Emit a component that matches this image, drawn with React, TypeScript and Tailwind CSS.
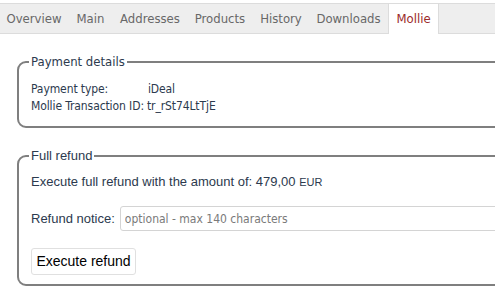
import React from "react";

const tabs = [
  { label: "Overview", w: "w-[68px]" },
  { label: "Main", w: "w-[45px]" },
  { label: "Addresses", w: "w-[74px]" },
  { label: "Products", w: "w-[66px]" },
  { label: "History", w: "w-[56px]" },
  { label: "Downloads", w: "w-[79px]" },
];

export default function App() {
  return (
    <div className="w-[495px] h-[296px] overflow-hidden bg-white text-[#2c3a4e]">
      <div className="mt-[3px] h-[31px] flex items-stretch border-y border-[#dcdcdc] bg-[#eeeeee] font-['DejaVu_Sans_Condensed','DejaVu_Sans',sans-serif] text-[13px] text-[#686868]">
        {tabs.map((t) => (
          <div key={t.label} className={`${t.w} flex items-center justify-center`}>
            {t.label}
          </div>
        ))}
        <div className="w-[51px] mb-[-1px] flex items-center justify-center bg-white border-x border-[#dcdcdc] text-[#9b2a2a]">
          Mollie
        </div>
      </div>

      <fieldset className="mt-[20px] ml-[17px] w-[520px] border-2 border-[#7f7f7f] rounded-[9px] pl-[10px] pr-[12px] pb-[11px] font-['DejaVu_Sans_Condensed','DejaVu_Sans',sans-serif]">
        <legend className="px-[2px] text-[13px] leading-[16px] text-[#2c3a4e]">Payment details</legend>
        <div className="mt-[11px] pl-[2px] grid grid-cols-[auto_1fr] gap-x-[3px] text-[12px] leading-[17px] tracking-[-0.1px]">
          <div>Payment type:</div>
          <div className="pl-[1px]">iDeal</div>
          <div>Mollie Transaction ID:</div>
          <div>tr_rSt74LtTjE</div>
        </div>
      </fieldset>

      <fieldset className="mt-[20px] ml-[17px] w-[520px] border-2 border-[#7f7f7f] rounded-[9px] pl-[10px] pr-[12px] pb-[9px] font-['Liberation_Sans',Arial,sans-serif]">
        <legend className="px-[2px] text-[13px] leading-[16px] text-[#2c3a4e]">Full refund</legend>
        <div className="pl-[2px] flex flex-col">
          <div className="mt-[9px] text-[13px] leading-[17px]">
            Execute full refund with the amount of: 479,00 <span className="text-[11px]">EUR</span>
          </div>
          <div className="mt-[15px] flex items-center gap-[5px]">
            <label className="text-[13px] leading-[17px]">Refund notice:</label>
            <input
              className="h-[25px] w-[400px] border border-[#d4d4d4] rounded-[3px] px-[4px] text-[12px] font-['DejaVu_Sans_Condensed','DejaVu_Sans',sans-serif] placeholder:text-[#7a7a7a] outline-none"
              placeholder="optional - max 140 characters"
            />
          </div>
          <div className="mt-[17px]">
            <button className="h-[27px] w-[105px] border border-[#e0e0e0] rounded-[3px] bg-white text-[14px] text-black">
              Execute refund
            </button>
          </div>
        </div>
      </fieldset>
    </div>
  );
}
